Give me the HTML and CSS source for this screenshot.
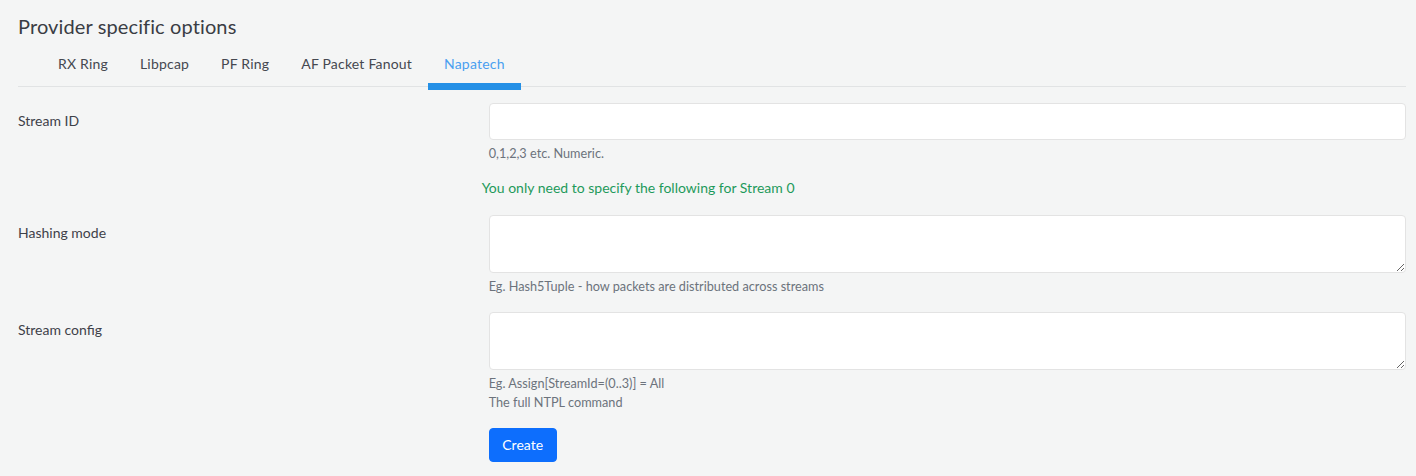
FILE: index.html
```html
<!DOCTYPE html>
<html lang="en">
<head>
<meta charset="utf-8">
<title>Provider specific options</title>
<link rel="stylesheet" href="styles.css">
</head>
<body>
<div class="page">
  <h2 class="title">Provider specific options</h2>
  <ul class="tabs">
    <li><a class="tab" href="#">RX Ring</a></li>
    <li><a class="tab" href="#">Libpcap</a></li>
    <li><a class="tab" href="#">PF Ring</a></li>
    <li><a class="tab" href="#">AF Packet Fanout</a></li>
    <li><a class="tab active" href="#">Napatech</a></li>
  </ul>
  <form class="form">
    <div class="row">
      <label class="label" for="sid">Stream ID</label>
      <div class="field">
        <input class="input" id="sid" type="text">
        <div class="help">0,1,2,3 etc. Numeric.</div>
      </div>
    </div>
    <div class="row">
      <div></div>
      <p class="note">You only need to specify the following for Stream 0</p>
    </div>
    <div class="row">
      <label class="label" for="hm">Hashing mode</label>
      <div class="field">
        <textarea class="input area" id="hm"></textarea>
        <div class="help">Eg. Hash5Tuple - how packets are distributed across streams</div>
      </div>
    </div>
    <div class="row">
      <label class="label" for="sc">Stream config</label>
      <div class="field">
        <textarea class="input area" id="sc"></textarea>
        <div class="help">Eg. Assign[StreamId=(0..3)] = All<br>The full NTPL command</div>
      </div>
    </div>
    <div class="row">
      <div></div>
      <div class="field"><button class="btn" type="button">Create</button></div>
    </div>
  </form>
</div>
</body>
</html>
```
FILE: styles.css
```css
* { box-sizing: border-box; }
html, body {
  margin: 0;
  background: #f4f5f5;
  font-family: "Lato", "Noto Sans", "Liberation Sans", sans-serif;
  font-size: 14px;
  color: #3e4149;
}
.page {
  padding: 14px 10px 0 18px;
}
.title {
  margin: 0;
  font-size: 20px;
  font-weight: 400;
  line-height: 24px;
  letter-spacing: 0.12px;
  color: #3a3d44;
}
.tabs {
  list-style: none;
  margin: 8px 0 0;
  padding: 0 0 0 24px;
  display: flex;
  border-bottom: 1px solid #e1e3e4;
}
.tab {
  display: block;
  position: relative;
  padding: 8px 16px 12px;
  line-height: 20px;
  font-size: 14px;
  letter-spacing: 0.2px;
  color: #454850;
  text-decoration: none;
}
.tab.active {
  color: #4a9ff0;
}
.tab.active::after {
  content: "";
  position: absolute;
  left: 0;
  right: 0;
  bottom: -4px;
  height: 7px;
  background: #2490e6;
}
.form {
  margin-top: 16px;
}
.row {
  display: grid;
  grid-template-columns: calc((100% + 24px) / 3 - 24px) 1fr;
  column-gap: 24px;
  margin-bottom: 16px;
}
.label {
  padding-top: 7px;
  line-height: 21px;
  color: #3e4149;
}
.input {
  display: block;
  width: 100%;
  height: 37px;
  margin: 0;
  border: 1px solid #e3e3e3;
  border-radius: 4px;
  background: #fff;
  font: inherit;
  padding: 6px 12px;
}
.area {
  height: 58px;
  resize: vertical;
}
.help {
  margin-top: 4px;
  font-size: 12.7px;
  line-height: 19px;
  color: #6c737c;
}
.note {
  margin: -2px 0 1px -7px;
  line-height: 21px;
  color: #1e9a5b;
}
.btn {
  border: 1px solid #0d6efd;
  background: #0d6efd;
  color: #fff;
  font: inherit;
  line-height: 20px;
  padding: 6px 12px;
  border-radius: 4px;
  width: 68px;
}
```
